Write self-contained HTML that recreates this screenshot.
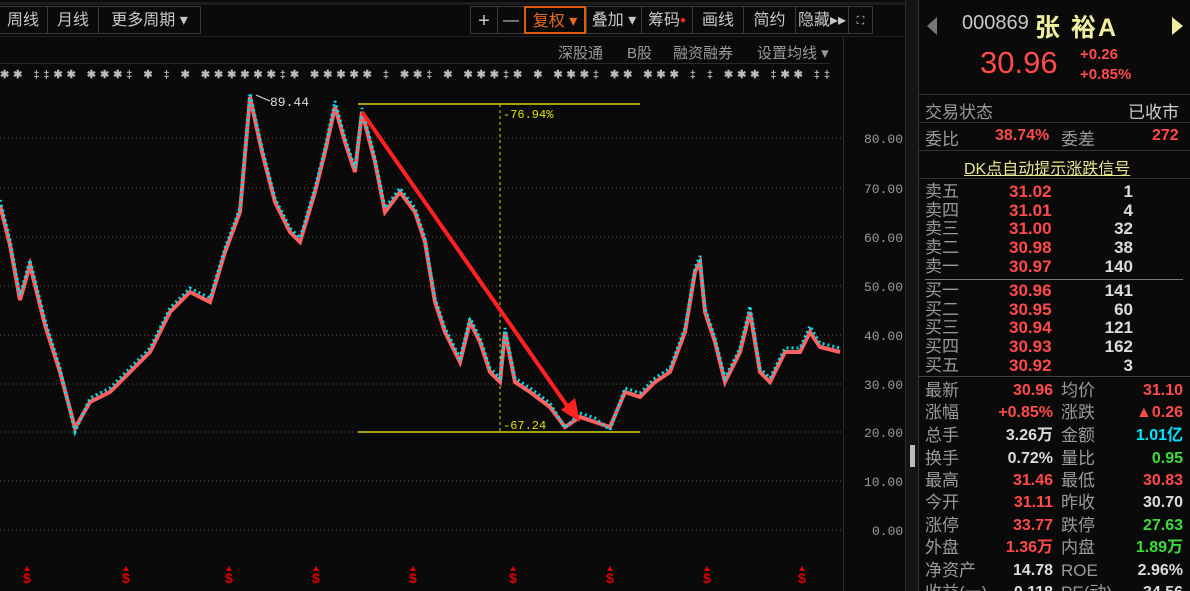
<!DOCTYPE html><html><head><meta charset="utf-8"><style>
html,body{margin:0;width:1190px;height:591px;overflow:hidden}
body{background:#0a0a0a;font-family:"Liberation Sans","Noto Sans CJK SC",sans-serif;position:relative}
.a{position:absolute;white-space:nowrap}
.btn{position:absolute;top:6px;height:28px;border:1px solid #3a3a3a;color:#c8c8c8;font-size:16px;line-height:28px;text-align:center;box-sizing:border-box}
.r{color:#ff4a4a}.w{color:#dcdcdc}.g{color:#9a9a9a}.gr{color:#3ddc3d}.c{color:#00e5ff}
.row{position:absolute;left:925px;width:258px;height:19px;font-size:17px;line-height:19px}
.row span{position:absolute}
.s{position:absolute;left:925px;width:258px;height:22px;font-size:16px;line-height:22px;font-weight:bold}
.s span{position:absolute}
.lab{color:#9a9a9a;font-weight:normal;font-size:17px}
</style></head><body>
<div class="a" style="left:0;top:2px;width:910px;height:3px;background:#1c1c1c"></div>
<div class="btn" style="left:-2px;width:50px">周线</div>
<div class="btn" style="left:47px;width:52px">月线</div>
<div class="btn" style="left:98px;width:103px">更多周期 ▾</div>
<div class="btn" style="left:470px;width:28px;font-size:20px">+</div>
<div class="btn" style="left:497px;width:28px">—</div>
<div class="btn" style="left:524px;width:62px;border:2px solid #e05a10;color:#e86a20">复权 ▾</div>
<div class="btn" style="left:586px;width:56px">叠加 ▾</div>
<div class="btn" style="left:641px;width:52px">筹码<span style="color:#f22;font-size:10px;vertical-align:top">●</span></div>
<div class="btn" style="left:692px;width:52px">画线</div>
<div class="btn" style="left:743px;width:53px">简约</div>
<div class="btn" style="left:795px;width:54px">隐藏▸▸</div>
<div class="btn" style="left:848px;width:25px;font-size:11px">⛶</div>
<div class="a" style="left:0;top:36px;width:905px;height:1px;background:#222"></div>
<div class="a g" style="left:558px;top:42px;font-size:15px">深股通</div>
<div class="a g" style="left:627px;top:42px;font-size:15px">B股</div>
<div class="a g" style="left:673px;top:42px;font-size:15px">融资融券</div>
<div class="a g" style="left:757px;top:42px;font-size:15px">设置均线 ▾</div>
<div class="a" style="left:0;top:63px;width:830px;height:1px;background:#2a2a2a"></div>
<div class="a" style="left:843px;top:37px;width:1px;height:554px;background:#2e2e2e"></div>
<div class="a" style="left:905px;top:0;width:12px;height:591px;background:#141414;border-left:1px solid #2a2a2a;border-right:1px solid #2a2a2a"></div>
<div class="a" style="left:910px;top:445px;width:5px;height:22px;background:#bbb"></div>
<svg class="a" style="left:0;top:0" width="905" height="591">
<g stroke="#555" stroke-dasharray="1,3">
<line x1="0" y1="138" x2="843" y2="138"/><line x1="0" y1="188" x2="843" y2="188"/><line x1="0" y1="237" x2="843" y2="237"/><line x1="0" y1="286" x2="843" y2="286"/><line x1="0" y1="335" x2="843" y2="335"/><line x1="0" y1="384" x2="843" y2="384"/><line x1="0" y1="432" x2="843" y2="432"/><line x1="0" y1="481" x2="843" y2="481"/><line x1="0" y1="530" x2="843" y2="530"/></g>
<g fill="#9a9a9a" font-family="Liberation Mono" font-size="13"><text x="864" y="143">80.00</text><text x="864" y="193">70.00</text><text x="864" y="242">60.00</text><text x="864" y="291">50.00</text><text x="864" y="340">40.00</text><text x="864" y="389">30.00</text><text x="864" y="437">20.00</text><text x="864" y="486">10.00</text><text x="872" y="535">0.00</text></g>
<g fill="#bbb" font-size="11" font-weight="bold"><text x="0" y="78" textLength="830" lengthAdjust="spacing">✱✱ ‡‡✱✱ ✱✱✱‡ ✱ ‡ ✱ ✱✱✱✱✱✱‡✱ ✱✱✱✱✱ ‡  ✱✱‡ ✱ ✱✱✱‡✱ ✱ ✱✱✱‡ ✱✱ ✱✱✱ ‡ ‡ ✱✱✱ ‡✱✱ ‡‡</text></g>
<g stroke="#d8d800" stroke-width="1.5"><line x1="358" y1="104" x2="640" y2="104"/><line x1="358" y1="432" x2="640" y2="432"/></g>
<line x1="500" y1="104" x2="500" y2="432" stroke="#d8d800" stroke-dasharray="3,3"/>
<text x="503" y="118" fill="#e0e000" font-family="Liberation Mono" font-size="12">-76.94%</text>
<text x="503" y="429" fill="#e0e000" font-family="Liberation Mono" font-size="12">-67.24</text>
<text x="270" y="106" fill="#ddd" font-family="Liberation Mono" font-size="13">89.44</text>
<line x1="256" y1="95" x2="270" y2="101" stroke="#ddd"/>
<polyline fill="none" stroke="#ff6060" stroke-width="4" points="0,205 10,245 20,300 30,265 45,325 60,372 75,428 90,402 110,392 130,372 150,352 170,312 190,292 210,302 225,252 240,212 250,97 262,152 275,202 290,232 300,242 315,192 325,152 335,107 345,142 355,172 362,112 375,162 385,212 400,192 415,212 425,242 435,302 445,332 460,362 470,322 480,342 490,372 500,382 505,332 515,382 530,392 550,407 565,427 580,417 595,422 610,427 625,392 640,397 655,382 670,372 685,332 695,272 700,262 705,312 715,342 725,382 740,352 750,312 760,372 770,382 785,352 800,352 810,332 820,347 840,352"/>
<polyline fill="none" stroke="#00e0f0" stroke-width="3" stroke-dasharray="2,3" points="0,200 10,240 20,295 30,260 45,320 60,368 75,432 90,398 110,388 130,368 150,348 170,308 190,288 210,298 225,248 240,208 250,93 262,148 275,198 290,228 300,238 315,188 325,148 335,101 345,138 355,168 362,108 375,158 385,208 400,188 415,208 425,238 435,298 445,328 460,358 470,318 480,338 490,368 500,378 505,328 515,378 530,388 550,403 565,428 580,413 595,418 610,430 625,388 640,393 655,378 670,368 685,328 695,268 700,256 705,308 715,338 725,378 740,348 750,306 760,368 770,378 785,348 800,348 810,326 820,343 840,348"/>
<line x1="362" y1="112" x2="570" y2="410" stroke="#ff2020" stroke-width="4"/>
<polygon points="580,422 561,410 575,398" fill="#ff2020"/>
<g fill="#e00000" font-size="14" font-weight="bold" font-family="Liberation Sans"><text x="23" y="583">$</text><text x="122" y="583">$</text><text x="225" y="583">$</text><text x="312" y="583">$</text><text x="409" y="583">$</text><text x="509" y="583">$</text><text x="606" y="583">$</text><text x="703" y="583">$</text><text x="798" y="583">$</text></g>
<g fill="#e00000"><polygon points="27,566 24,571 30,571"/><polygon points="126,566 123,571 129,571"/><polygon points="229,566 226,571 232,571"/><polygon points="316,566 313,571 319,571"/><polygon points="413,566 410,571 416,571"/><polygon points="513,566 510,571 516,571"/><polygon points="610,566 607,571 613,571"/><polygon points="707,566 704,571 710,571"/><polygon points="802,566 799,571 805,571"/></g>
</svg>
<div class="a" style="left:918px;top:0;width:272px;height:591px;border-left:1px solid #333"></div>
<svg class="a" style="left:927px;top:17px" width="12" height="18"><polygon points="10,0 10,18 0,9" fill="#777"/></svg>
<svg class="a" style="left:1172px;top:17px" width="12" height="18"><polygon points="0,0 0,18 11,9" fill="#f0f0a0"/></svg>
<div class="a" style="left:962px;top:12px;font-size:20px;color:#c8c8c8">000869</div>
<div class="a" style="left:1035px;top:8px;font-size:25px;color:#f0f0a0;font-weight:bold;letter-spacing:2px">张 裕A</div>
<div class="a r" style="left:980px;top:45px;font-size:31px">30.96</div>
<div class="a r" style="left:1080px;top:45px;font-size:15px;line-height:20px;font-weight:bold">+0.26<br>+0.85%</div>
<div class="a" style="left:919px;top:94px;width:271px;height:1px;background:#333"></div>
<div class="a g" style="left:925px;top:98px;font-size:17px">交易状态</div>
<div class="a w" style="left:1128px;top:98px;font-size:17px;color:#ccc">已收市</div>
<div class="a" style="left:919px;top:122px;width:271px;height:1px;background:#333"></div>
<div class="a g" style="left:925px;top:125px;font-size:17px">委比</div>
<div class="a r" style="left:995px;top:127px;font-size:16px;font-weight:bold">38.74%</div>
<div class="a g" style="left:1061px;top:125px;font-size:17px">委差</div>
<div class="a r" style="left:1152px;top:127px;font-size:16px;font-weight:bold">272</div>
<div class="a" style="left:919px;top:150px;width:271px;height:1px;background:#333"></div>
<div class="a" style="left:964px;top:155px;font-size:16px;color:#e8e890;text-decoration:underline">DK点自动提示涨跌信号</div>
<div class="a" style="left:919px;top:178px;width:271px;height:1px;background:#333"></div>
<div class="row" style="top:182px"><span class="g">卖五</span><span class="r" style="left:84px;font-weight:bold">31.02</span><span class="w" style="right:50px;font-weight:bold">1</span></div>
<div class="row" style="top:201px"><span class="g">卖四</span><span class="r" style="left:84px;font-weight:bold">31.01</span><span class="w" style="right:50px;font-weight:bold">4</span></div>
<div class="row" style="top:219px"><span class="g">卖三</span><span class="r" style="left:84px;font-weight:bold">31.00</span><span class="w" style="right:50px;font-weight:bold">32</span></div>
<div class="row" style="top:238px"><span class="g">卖二</span><span class="r" style="left:84px;font-weight:bold">30.98</span><span class="w" style="right:50px;font-weight:bold">38</span></div>
<div class="row" style="top:257px"><span class="g">卖一</span><span class="r" style="left:84px;font-weight:bold">30.97</span><span class="w" style="right:50px;font-weight:bold">140</span></div>
<div class="a" style="left:925px;top:279px;width:258px;height:1px;background:#777"></div>
<div class="row" style="top:281px"><span class="g">买一</span><span class="r" style="left:84px;font-weight:bold">30.96</span><span class="w" style="right:50px;font-weight:bold">141</span></div>
<div class="row" style="top:300px"><span class="g">买二</span><span class="r" style="left:84px;font-weight:bold">30.95</span><span class="w" style="right:50px;font-weight:bold">60</span></div>
<div class="row" style="top:318px"><span class="g">买三</span><span class="r" style="left:84px;font-weight:bold">30.94</span><span class="w" style="right:50px;font-weight:bold">121</span></div>
<div class="row" style="top:337px"><span class="g">买四</span><span class="r" style="left:84px;font-weight:bold">30.93</span><span class="w" style="right:50px;font-weight:bold">162</span></div>
<div class="row" style="top:356px"><span class="g">买五</span><span class="r" style="left:84px;font-weight:bold">30.92</span><span class="w" style="right:50px;font-weight:bold">3</span></div>
<div class="a" style="left:919px;top:376px;width:271px;height:1px;background:#444"></div>
<div class="s" style="top:380px"><span class="lab">最新</span><span class="r" style="right:130px">30.96</span><span class="lab" style="left:136px">均价</span><span class="r" style="right:0">31.10</span></div>
<div class="s" style="top:402px"><span class="lab">涨幅</span><span class="r" style="right:130px">+0.85%</span><span class="lab" style="left:136px">涨跌</span><span class="r" style="right:0">▲0.26</span></div>
<div class="s" style="top:425px"><span class="lab">总手</span><span class="w" style="right:130px">3.26万</span><span class="lab" style="left:136px">金额</span><span class="c" style="right:0">1.01亿</span></div>
<div class="s" style="top:448px"><span class="lab">换手</span><span class="w" style="right:130px">0.72%</span><span class="lab" style="left:136px">量比</span><span class="gr" style="right:0">0.95</span></div>
<div class="s" style="top:470px"><span class="lab">最高</span><span class="r" style="right:130px">31.46</span><span class="lab" style="left:136px">最低</span><span class="r" style="right:0">30.83</span></div>
<div class="s" style="top:492px"><span class="lab">今开</span><span class="r" style="right:130px">31.11</span><span class="lab" style="left:136px">昨收</span><span class="w" style="right:0">30.70</span></div>
<div class="s" style="top:515px"><span class="lab">涨停</span><span class="r" style="right:130px">33.77</span><span class="lab" style="left:136px">跌停</span><span class="gr" style="right:0">27.63</span></div>
<div class="s" style="top:537px"><span class="lab">外盘</span><span class="r" style="right:130px">1.36万</span><span class="lab" style="left:136px">内盘</span><span class="gr" style="right:0">1.89万</span></div>
<div class="s" style="top:560px"><span class="lab">净资产</span><span class="w" style="right:130px">14.78</span><span class="lab" style="left:136px">ROE</span><span class="w" style="right:0">2.96%</span></div>
<div class="s" style="top:582px"><span class="lab">收益(一)</span><span class="w" style="right:130px">0.118</span><span class="lab" style="left:136px">PE(动)</span><span class="w" style="right:0">34.56</span></div>
</body></html>
